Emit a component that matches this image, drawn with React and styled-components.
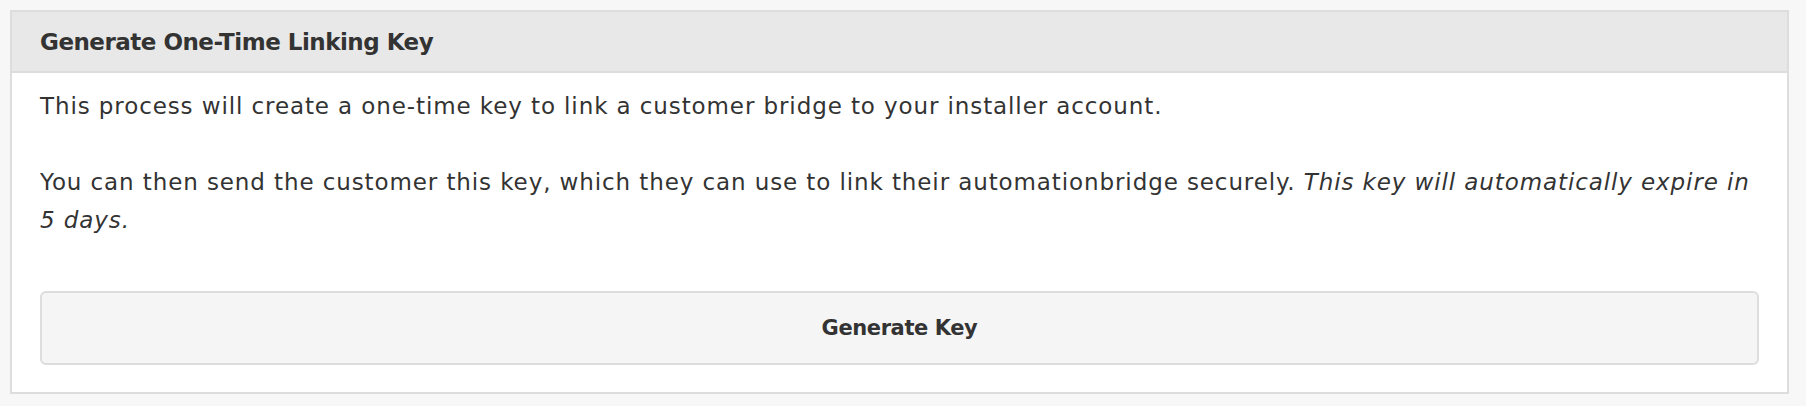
import React from 'react';
import styled, { createGlobalStyle } from 'styled-components';

const GlobalStyle = createGlobalStyle`
   * {
      box-sizing: border-box;
   }
   body {
      margin: 0;
      background: #f7f7f7;
      font-family: 'DejaVu Sans', 'Open Sans', sans-serif;
      color: #333;
   }
`;

const Page = styled.div`
   padding: 10px 17px 12px 10px;
`;

const Panel = styled.section`
   background: #fff;
   border: 2px solid #ddd;
`;

const Heading = styled.header`
   display: flex;
   align-items: center;
   height: 61px;
   padding: 0 28px;
   background: #e8e8e8;
   border-bottom: 2px solid #ddd;
`;

const Title = styled.h3`
   margin: 0;
   font-size: 23px;
   font-weight: 700;
   letter-spacing: -0.5px;
   color: #333;
`;

const Body = styled.div`
   padding: 14px 28px 27px;
`;

const Text = styled.p`
   margin: 0 0 38px;
   font-size: 23px;
   line-height: 38px;
   letter-spacing: 0.9px;
   color: #333;

   &:last-of-type {
      margin-bottom: 52px;
   }
`;

const Button = styled.button`
   display: block;
   width: 100%;
   height: 74px;
   background: #f5f5f5;
   border: 2px solid #ddd;
   border-radius: 6px;
   font-family: inherit;
   font-size: 21px;
   font-weight: 700;
   letter-spacing: -0.4px;
   color: #333;
   cursor: pointer;
   &:hover {
      background: #eee;
   }
`;

function App() {
   return (
      <Page>
         <GlobalStyle />
         <Panel>
            <Heading>
               <Title>Generate One-Time Linking Key</Title>
            </Heading>
            <Body>
               <Text>This process will create a one-time key to link a customer bridge to your installer account.</Text>
               <Text>
                  You can then send the customer this key, which they can use to link their automationbridge securely.{' '}
                  <em>This key will automatically expire in 5 days.</em>
               </Text>
               <Button>Generate Key</Button>
            </Body>
         </Panel>
      </Page>
   );
}

export default App;
